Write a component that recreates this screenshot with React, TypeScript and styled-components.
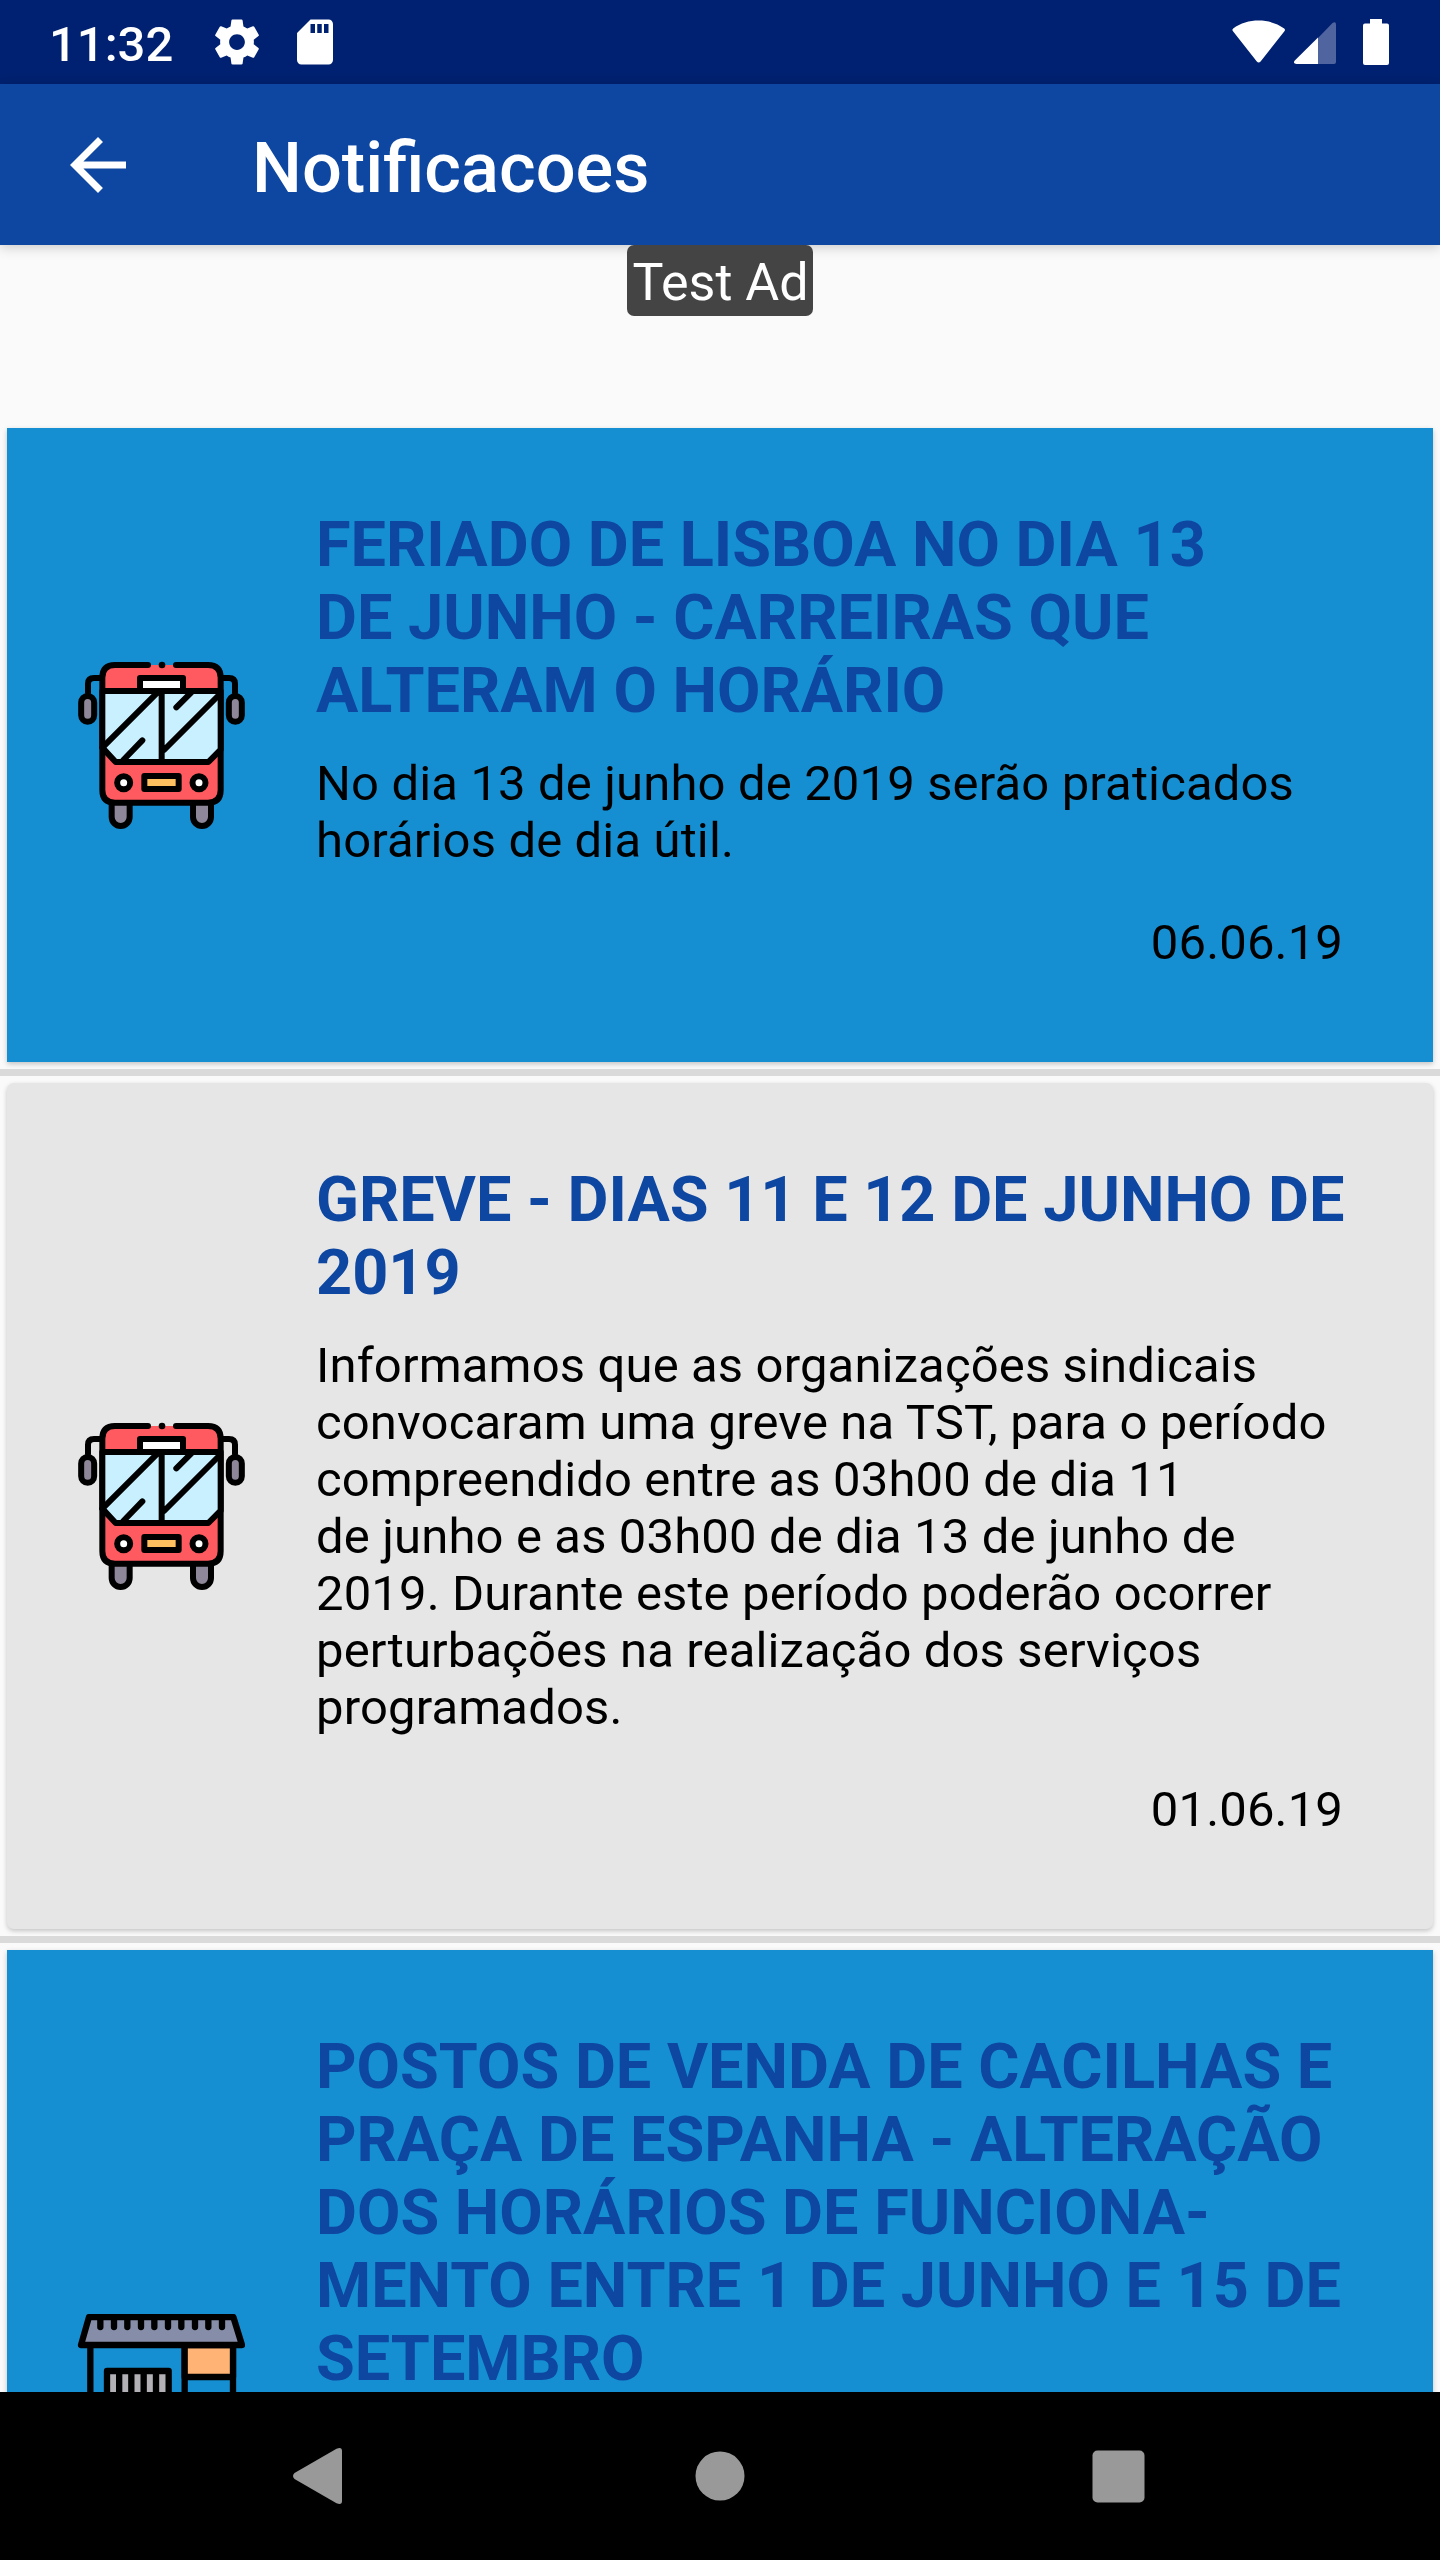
import React from "react";
import styled, { createGlobalStyle } from "styled-components";

const GlobalStyle = createGlobalStyle`
  * { box-sizing: border-box; }
  body { margin: 0; background: #fafafa; }
`;

const Screen = styled.div`
  width: 1440px;
  height: 2560px;
  display: flex;
  flex-direction: column;
  overflow: hidden;
  background: #fafafa;
  font-family: Roboto, "Noto Sans", sans-serif;
  color: #000;
`;

const StatusBar = styled.header`
  flex: none;
  height: 84px;
  padding: 0 51px 0 49px;
  display: flex;
  align-items: center;
  justify-content: space-between;
  background: #002171;
`;

const StatusGroup = styled.div<{ $gap: number }>`
  display: flex;
  align-items: center;
  gap: ${(p) => p.$gap}px;

  svg { display: block; }
`;

const BatterySlot = styled.div`
  padding-left: 19px;
`;

const Clock = styled.span`
  width: 137px;
  padding-top: 5px;
  font-size: 49px;
  font-weight: 500;
  line-height: 58px;
  color: #fff;
  white-space: nowrap;
`;

const Toolbar = styled.div`
  flex: none;
  height: 161px;
  padding: 0 56px;
  display: flex;
  align-items: center;
  gap: 112px;
  background: #0d47a1;
  box-shadow: 0 2px 12px rgba(0, 0, 0, 0.2);
`;

const Title = styled.h1`
  margin: 0;
  padding-top: 6px;
  font-size: 70.35px;
  font-weight: 500;
  line-height: 82px;
  color: #fff;
`;

const AdSlot = styled.div`
  flex: none;
  height: 176px;
  display: flex;
  justify-content: center;
  align-items: flex-start;
`;

const AdLabel = styled.span`
  position: relative;
  width: 186px;
  height: 71px;
  padding-left: 1px;
  border-radius: 7px;
  background: #444;
  color: #fff;
  font-size: 52px;
  line-height: 75px;
  text-align: center;
  white-space: nowrap;
`;

const List = styled.main`
  flex: 1;
  min-height: 0;
  overflow: hidden;
`;

const Item = styled.div`
  padding: 7px;
  border-bottom: 7px solid #dbdada;
`;

const Card = styled.article<{ $unread: boolean; $height: number }>`
  height: ${(p) => p.$height}px;
  padding: 80px 84px 0 70px;
  display: flex;
  background: ${(p) => (p.$unread ? "#168fd2" : "#e6e6e6")};
  border-radius: ${(p) => (p.$unread ? 0 : 7)}px;
  box-shadow: 0 2px 5px rgba(0, 0, 0, 0.22);
`;

const IconColumn = styled.div`
  flex: none;
  width: 239px;
  margin: -80px 0 0;
  display: flex;
  align-items: center;

  svg { display: block; }
`;

const Content = styled.div`
  flex: 1;
  white-space: nowrap;
`;

const Heading = styled.h2`
  margin: 0;
  font-size: 63px;
  font-weight: 700;
  line-height: 73px;
  color: #0d47a1;
`;

const Body = styled.p`
  margin: 28px 0 0;
  font-size: 49px;
  line-height: 57px;
  letter-spacing: 0.14px;
`;

const DateText = styled.time`
  display: block;
  margin-top: 45px;
  padding-right: 6px;
  font-size: 49px;
  line-height: 57px;
  letter-spacing: 0.14px;
  text-align: right;
`;

const NavBar = styled.nav`
  flex: none;
  height: 168px;
  padding: 0 295px 0 293px;
  display: flex;
  align-items: center;
  justify-content: space-between;
  background: #000;

  svg { display: block; }
`;

const HomeSlot = styled.div`
  padding-left: 5px;
`;

const GearIcon = () => (
  <svg width="54" height="54" viewBox="0 0 24 24" fill="#fff">
    <path d="M19.43 12.98c.04-.32.07-.64.07-.98s-.03-.66-.07-.98l2.11-1.65c.19-.15.24-.42.12-.64l-2-3.46c-.12-.22-.39-.3-.61-.22l-2.49 1c-.52-.4-1.08-.73-1.69-.98l-.38-2.65C14.46 2.18 14.25 2 14 2h-4c-.25 0-.46.18-.49.42l-.38 2.65c-.61.25-1.17.59-1.69.98l-2.49-1c-.23-.09-.49 0-.61.22l-2 3.46c-.13.22-.07.49.12.64l2.11 1.65c-.04.32-.07.65-.07.98s.03.66.07.98l-2.11 1.65c-.19.15-.24.42-.12.64l2 3.46c.12.22.39.3.61.22l2.49-1c.52.4 1.08.73 1.69.98l.38 2.65c.03.24.24.42.49.42h4c.25 0 .46-.18.49-.42l.38-2.65c.61-.25 1.17-.59 1.69-.98l2.49 1c.23.09.49 0 .61-.22l2-3.46c.12-.22.07-.49-.12-.64l-2.11-1.65zM12 15.5c-1.93 0-3.5-1.57-3.5-3.5s1.57-3.5 3.5-3.5 3.5 1.57 3.5 3.5-1.57 3.5-3.5 3.5z" />
  </svg>
);

const SdCardIcon = () => (
  <svg width="54" height="54" viewBox="0 0 24 24" fill="#fff">
    <path d="M18 2h-8L4.02 8 4 20c0 1.1.9 2 2 2h12c1.1 0 2-.9 2-2V4c0-1.1-.9-2-2-2zm-6 6h-2V4h2v4zm3 0h-2V4h2v4zm3 0h-2V4h2v4z" />
  </svg>
);

const WifiIcon = () => (
  <svg width="54" height="46" viewBox="0 0 54 46" fill="#fff">
    <path d="M1 12.2Q-.3 10.8 1.2 9.6C8.5 4.200 17.500 1.6 26.700 1.6s18.200 2.600 25.500 8q1.500 1.200.2 2.600L28.600 42.500q-1.900 2-3.800 0Z" />
  </svg>
);

const SignalIcon = () => (
  <svg width="42" height="44" viewBox="0 -2 42 44">
    <path d="M24 16 38.500 1Q42-1.200 42 2.500V40q0 2-2 2H24Z" fill="#5065a0" />
    <path d="M24 15.500V42H2.500Q-1.500 41.500.8 38.500Z" fill="#fff" />
  </svg>
);

const BatteryIcon = () => (
  <svg width="26" height="46" viewBox="0 0 26 46" fill="#fff">
    <path d="M7 0h12v4.500h5q2 0 2 2V44q0 2-2 2H2q-2 0-2-2V6.500q0-2 2-2h5Z" />
  </svg>
);

const BackArrow = () => (
  <svg width="84" height="84" viewBox="0 0 24 24" fill="#fff">
    <path d="M20 11H7.830l5.590-5.590L12 4l-8 8 8 8 1.410-1.410L7.830 13H20v-2z" />
  </svg>
);

const BusIcon = () => (
  <svg width="168" height="168" viewBox="51 63 504 504" fill="none" stroke="#000" strokeWidth="18" strokeLinecap="round" strokeLinejoin="round">
    <path d="M155 485v46a27 27 0 0 0 54 0v-46ZM399 485v46a27 27 0 0 0 54 0v-46Z" fill="#8e8699" />
    <path d="M84 158v-27q0-17 18-17h24M525 158v-27q0-17-18-17h-24" />
    <rect x="63.500" y="168" width="39" height="77" rx="19.500" fill="#8e8699" />
    <rect x="506.500" y="168" width="39" height="77" rx="19.500" fill="#8e8699" />
    <rect x="127" y="75" width="355" height="413" rx="38" fill="#ff5a5f" stroke="none" />
    <path d="M264 75H165q-38 0-38 38v337q0 38 38 38h279q38 0 38-38V113q0-38-38-38h-96" />
    <circle cx="306" cy="75" r="10" fill="#000" stroke="none" />
    <path d="M240 150v-36h129v36" fill="#fff" />
    <path d="M127 153h355v176l-37 37H167l-40-43Z" fill="#c8f0ff" />
    <path d="M305 153v213M127 323 295 155M190 360l57-59M312 330 480 162M349 202l45-45" />
    <circle cx="191" cy="428" r="19.500" fill="#fff" />
    <circle cx="417" cy="428" r="19.500" fill="#fff" />
    <rect x="253" y="408" width="103" height="39" fill="#ffc15f" />
  </svg>
);

const KioskIcon = () => (
  <svg width="168" height="168" viewBox="51 72 504 504" fill="none" stroke="#000" strokeWidth="19" strokeLinecap="round" strokeLinejoin="round">
    <path d="M91 165v402h428V165M374 165v402" />
    <path d="M374 165h145v96H374Z" fill="#ffb374" />
    <path d="M141 243h185v140H141Z" fill="#b3b1b6" />
    <path d="M177.500 245v138M214 245v138M251 245v138M288 245v138" />
    <path d="M87 81h433l26 84H63Z" fill="#868da8" />
    <path d="M121 85v26M162 85v26M202 85v26M243 85v26M283 85v26M324 85v26M364 85v26M405 85v26M445 85v26M486 85v26" />
  </svg>
);

const NavBack = () => (
  <svg width="49" height="56" viewBox="0 0 49 56" fill="#999">
    <path d="M1.500 25 43.500.8Q49-1.500 49 3v50q0 4.500-5.500 2.200L1.500 31q-3-3 0-6Z" />
  </svg>
);

const NavHome = () => (
  <svg width="50" height="50" viewBox="0 0 50 50" fill="#999">
    <circle cx="25" cy="25" r="24.500" />
  </svg>
);

const NavRecent = () => (
  <svg width="53" height="53" viewBox="0 0 53 53" fill="#999">
    <rect x=".5" y=".5" width="52" height="52" rx="5" />
  </svg>
);

interface Notice {
  icon: React.ReactNode;
  unread: boolean;
  height: number;
  title: string[];
  body: string[];
  date?: string;
}

const notices: Notice[] = [
  {
    icon: <BusIcon />,
    unread: true,
    height: 634,
    title: ["FERIADO DE LISBOA NO DIA 13", "DE JUNHO - CARREIRAS QUE", "ALTERAM O HORÁRIO"],
    body: ["No dia 13 de junho de 2019 serão praticados", "horários de dia útil."],
    date: "06.06.19",
  },
  {
    icon: <BusIcon />,
    unread: false,
    height: 846,
    title: ["GREVE - DIAS 11 E 12 DE JUNHO DE", "2019"],
    body: [
      "Informamos que as organizações sindicais",
      "convocaram uma greve na TST, para o período",
      "compreendido entre as 03h00 de dia 11",
      "de junho e as 03h00 de dia 13 de junho de",
      "2019. Durante este período poderão ocorrer",
      "perturbações na realização dos serviços",
      "programados.",
    ],
    date: "01.06.19",
  },
  {
    icon: <KioskIcon />,
    unread: true,
    height: 896,
    title: [
      "POSTOS DE VENDA DE CACILHAS E",
      "PRAÇA DE ESPANHA - ALTERAÇÃO",
      "DOS HORÁRIOS DE FUNCIONA-",
      "MENTO ENTRE 1 DE JUNHO E 15 DE",
      "SETEMBRO",
    ],
    body: [],
  },
];

const Lines = ({ lines }: { lines: string[] }) => (
  <>
    {lines.map((line, i) => (
      <React.Fragment key={line}>
        {i > 0 && <br />}
        {line}
      </React.Fragment>
    ))}
  </>
);

export default function App() {
  return (
    <>
      <GlobalStyle />
      <Screen>
        <StatusBar>
          <StatusGroup $gap={24}>
            <Clock>11:32</Clock>
            <GearIcon />
            <SdCardIcon />
          </StatusGroup>
          <StatusGroup $gap={8}>
            <WifiIcon />
            <SignalIcon />
            <BatterySlot>
              <BatteryIcon />
            </BatterySlot>
          </StatusGroup>
        </StatusBar>
        <Toolbar>
          <BackArrow />
          <Title>Notificacoes</Title>
        </Toolbar>
        <AdSlot>
          <AdLabel>Test Ad</AdLabel>
        </AdSlot>
        <List>
          {notices.map((n) => (
            <Item key={n.title[0]}>
              <Card $unread={n.unread} $height={n.height}>
                <IconColumn>{n.icon}</IconColumn>
                <Content>
                  <Heading><Lines lines={n.title} /></Heading>
                  {n.body.length > 0 && <Body><Lines lines={n.body} /></Body>}
                  {n.date && <DateText>{n.date}</DateText>}
                </Content>
              </Card>
            </Item>
          ))}
        </List>
        <NavBar>
          <NavBack />
          <HomeSlot>
            <NavHome />
          </HomeSlot>
          <NavRecent />
        </NavBar>
      </Screen>
    </>
  );
}
